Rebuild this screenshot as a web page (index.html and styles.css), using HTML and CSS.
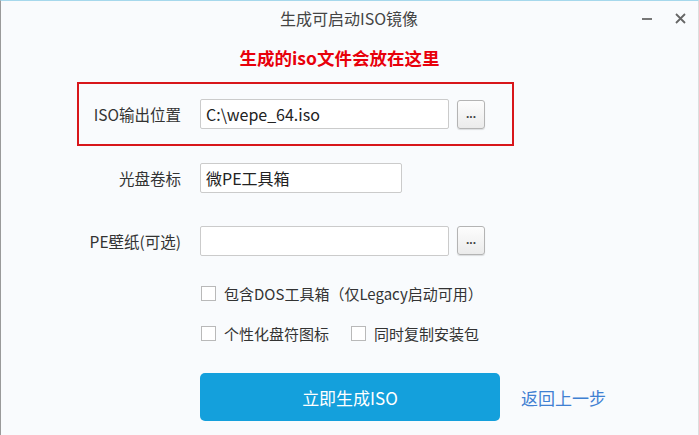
FILE: index.html
```
<!DOCTYPE html>
<html lang="zh-CN">
<head>
    <meta charset="UTF-8">
    <title>生成可启动ISO镜像</title>
    <link rel="stylesheet" href="styles.css">
</head>
<body>
    <div class="window">
        <div class="titlebar">
            <span></span>
            <span class="title">生成可启动ISO镜像</span>
            <div class="controls">
                <span class="min"></span>
                <svg class="close" width="11" height="11" viewBox="0 0 11 11">
                    <path d="M1 1L10 10M10 1L1 10" stroke="#666" stroke-width="1.8"/>
                </svg>
            </div>
        </div>

        <div class="note">生成的iso文件会放在这里</div>

        <div class="row row-highlight">
            <label>ISO输出位置</label>
            <input type="text" class="field" value="C:\wepe_64.iso">
            <button class="browse">...</button>
        </div>
        <div class="row">
            <label>光盘卷标</label>
            <input type="text" class="field field-short" value="微PE工具箱">
        </div>
        <div class="row">
            <label>PE壁纸(可选)</label>
            <input type="text" class="field" value="">
            <button class="browse">...</button>
        </div>

        <div class="checks">
            <div class="check-line">
                <span class="check"><span class="box"></span>包含DOS工具箱（仅Legacy启动可用）</span>
            </div>
            <div class="check-line">
                <span class="check"><span class="box"></span>个性化盘符图标</span>
                <span class="check"><span class="box"></span>同时复制安装包</span>
            </div>
        </div>

        <div class="actions">
            <button class="btn-main">立即生成ISO</button>
            <a href="#" class="back">返回上一步</a>
        </div>
    </div>
</body>
</html>
```

FILE: styles.css
```
body {
    margin: 0;
    font-family: "Noto Sans CJK SC", "Noto Sans", sans-serif;
    background: #f9fbfd;
}
.window {
    width: 699px;
    height: 435px;
    box-sizing: border-box;
    border-top: 1px solid #a6d8ec;
    border-left: 1px solid #9a9a9a;
    border-right: 1px solid #dddddd;
    background: #f9fbfd;
    overflow: hidden;
}
.titlebar {
    display: grid;
    grid-template-columns: 1fr auto 1fr;
    align-items: center;
    height: 33px;
}
.title {
    font-size: 16px;
    color: #444;
    margin-left: -1px;
}
.controls {
    display: flex;
    align-items: center;
    justify-content: flex-end;
    padding-right: 12px;
    gap: 23px;
}
.min {
    display: block;
    width: 10px;
    height: 2px;
    background: #777;
    margin-top: 3px;
}
.close {
    display: block;
    margin-top: 2px;
}
.note {
    text-align: center;
    padding-right: 20px;
    margin-top: 12px;
    height: 36px;
    font-size: 17.5px;
    font-weight: bold;
    color: #e8000b;
    line-height: 24px;
}
.row {
    display: flex;
    align-items: center;
    box-sizing: border-box;
    margin-left: 76px;
    width: 437px;
    height: 63px;
    padding-left: 8px;
    border: 2px solid transparent;
}
.row-highlight {
    height: 64px;
    border-color: #d8161b;
}
.row label {
    width: 94px;
    margin-right: 19px;
    text-align: right;
    font-size: 15.5px;
    color: #333;
    white-space: nowrap;
}
.field {
    width: 249px;
    height: 30px;
    box-sizing: border-box;
    border: 1px solid #cbcbcb;
    border-radius: 2px;
    background: #fff;
    padding: 0 5px;
    font-family: inherit;
    font-size: 16px;
    color: #222;
    outline: none;
}
.field-short {
    width: 202px;
}
.browse {
    width: 28px;
    height: 29px;
    margin-left: 8px;
    border: 1px solid #b4b4b4;
    border-radius: 3px;
    background: linear-gradient(#fdfdfd, #ebebeb);
    box-shadow: 0 1px 1px rgba(0,0,0,0.12);
    font-size: 12px;
    font-weight: bold;
    color: #444;
    padding: 0;
    line-height: 27px;
}
.checks {
    margin-top: 10px;
    margin-left: 200px;
    display: flex;
    flex-direction: column;
    gap: 18px;
}
.check-line {
    display: flex;
    gap: 22px;
    height: 22px;
    align-items: center;
}
.check {
    display: flex;
    align-items: center;
    font-size: 15px;
    color: #333;
}
.box {
    width: 13px;
    height: 13px;
    border: 1px solid #b9b9b9;
    background: #fff;
    margin-right: 8px;
}
.actions {
    display: flex;
    align-items: center;
    margin-top: 29px;
    margin-left: 199px;
}
.btn-main {
    width: 300px;
    height: 48px;
    border: none;
    border-radius: 5px;
    background: #14a0dc;
    color: #fff;
    font-family: inherit;
    font-size: 17px;
}
.back {
    margin-left: 21px;
    font-size: 17px;
    color: #3f80d2;
    text-decoration: none;
}
```
